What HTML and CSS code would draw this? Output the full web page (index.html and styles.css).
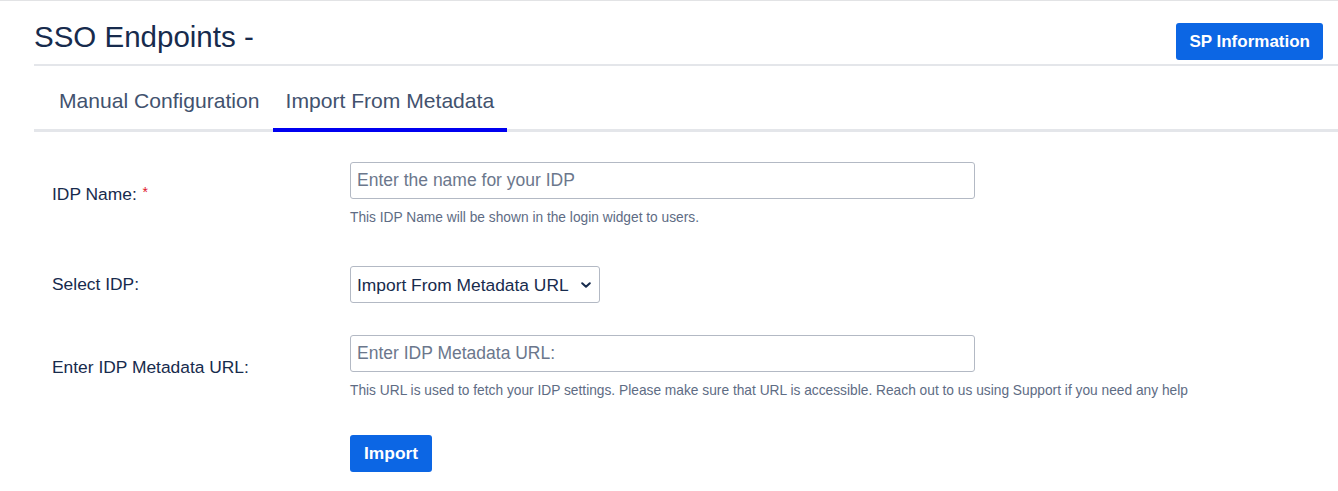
FILE: index.html
```html
<!DOCTYPE html>
<html lang="en">
<head>
<meta charset="UTF-8">
<meta name="viewport" content="width=device-width, initial-scale=1.0">
<title>SSO Endpoints</title>
<link rel="stylesheet" href="styles.css">
</head>
<body>

<div class="page">
    <div class="page-header">
        <h1 class="page-title">SSO Endpoints -</h1>
        <button type="button" class="btn btn-primary">SP Information</button>
    </div>

    <ul class="tabs">
        <li class="tab">Manual Configuration</li>
        <li class="tab tab-active">Import From Metadata</li>
    </ul>

    <form class="idp-form">
        <div class="form-row row-name">
            <label class="form-label" for="idpName">IDP Name: <span class="required">*</span></label>
            <div class="form-field">
                <input type="text" id="idpName" class="text-input" placeholder="Enter the name for your IDP">
                <p class="help-text">This IDP Name will be shown in the login widget to users.</p>
            </div>
        </div>

        <div class="form-row row-select">
            <label class="form-label" for="idpSelect">Select IDP:</label>
            <div class="form-field">
                <div class="select-wrap">
                    <select id="idpSelect" class="select-input">
                        <option>Import From Metadata URL</option>
                        <option>Import From Metadata File</option>
                    </select>
                    <svg class="select-arrow" width="10" height="6" viewBox="0 0 10 6">
                        <path d="M1.2 1.2 L5 4.8 L8.8 1.2" fill="none" stroke="#172b4d" stroke-width="2" stroke-linecap="round" stroke-linejoin="round"/>
                    </svg>
                </div>
            </div>
        </div>

        <div class="form-row row-url">
            <label class="form-label" for="idpUrl">Enter IDP Metadata URL:</label>
            <div class="form-field">
                <input type="text" id="idpUrl" class="text-input" placeholder="Enter IDP Metadata URL:">
                <p class="help-text">This URL is used to fetch your IDP settings. Please make sure that URL is accessible. Reach out to us using Support if you need any help</p>
            </div>
        </div>

        <div class="form-actions">
            <button type="button" class="btn btn-primary">Import</button>
        </div>
    </form>
</div>

</body>
</html>
```

FILE: styles.css
```css
body {
    margin: 0;
    font-family: "Liberation Sans", Arial, sans-serif;
    color: #172b4d;
    background: #fff;
}
.page {
    border-top: 1px solid #e2e3e5;
    padding-left: 34px;
}
.page-header {
    display: flex;
    justify-content: space-between;
    align-items: flex-start;
    height: 65px;
    box-sizing: border-box;
    padding: 19px 15px 0 0;
    border-bottom: 2px solid #e4e6ea;
}
.page-title {
    margin: 0;
    font-size: 29.5px;
    line-height: 33px;
    font-weight: normal;
    color: #172b4d;
}
.btn {
    height: 37px;
    border: none;
    border-radius: 3px;
    padding: 0 13px;
    font-family: inherit;
    font-size: 17px;
    font-weight: bold;
    cursor: pointer;
}
.btn-primary {
    background-color: #0c66e4;
    color: #fff;
}
.page-header .btn {
    margin-top: 3px;
}
.tabs {
    display: flex;
    margin: 0;
    padding: 0 0 0 12px;
    list-style: none;
    border-bottom: 3px solid #e4e6ea;
}
.tab {
    padding: 23px 13px 15px;
    font-size: 21.1px;
    line-height: 24px;
    color: #42526e;
    border-bottom: 4px solid transparent;
    margin-bottom: -3px;
    cursor: pointer;
}
.tab-active {
    border-bottom-color: #0000f0;
}
.idp-form {
    padding-left: 18px;
}
.form-row {
    display: flex;
    align-items: center;
}
.row-name {
    margin-top: 30px;
}
.row-select {
    margin-top: 40px;
}
.row-url {
    margin-top: 32px;
}
.form-label {
    width: 298px;
    flex-shrink: 0;
    font-size: 17.4px;
    color: #172b4d;
}
.required {
    color: #e0182a;
    font-size: 14px;
    vertical-align: 3px;
    margin-left: 1px;
}
.text-input {
    display: block;
    width: 625px;
    height: 37px;
    box-sizing: border-box;
    border: 1px solid #b3b9c4;
    border-radius: 3px;
    padding: 0 6px;
    font-family: inherit;
    font-size: 17.5px;
    color: #172b4d;
    outline: none;
}
.text-input::placeholder {
    color: #6b778c;
}
.select-wrap {
    position: relative;
    display: inline-block;
}
.select-input {
    -webkit-appearance: none;
    appearance: none;
    display: block;
    width: 250px;
    height: 37px;
    box-sizing: border-box;
    border: 1px solid #b3b9c4;
    border-radius: 3px;
    padding: 0 28px 0 6px;
    font-family: inherit;
    font-size: 17.4px;
    color: #172b4d;
    background: #fff;
    outline: none;
}
.select-arrow {
    position: absolute;
    right: 9px;
    top: 16px;
    pointer-events: none;
}
.help-text {
    margin: 11px 0 0;
    font-size: 13.75px;
    line-height: 16px;
    color: #5e6c84;
}
.form-actions {
    margin-top: 36px;
    padding-left: 298px;
}
.form-actions .btn {
    padding: 0 14px;
    font-size: 17.4px;
}
```
